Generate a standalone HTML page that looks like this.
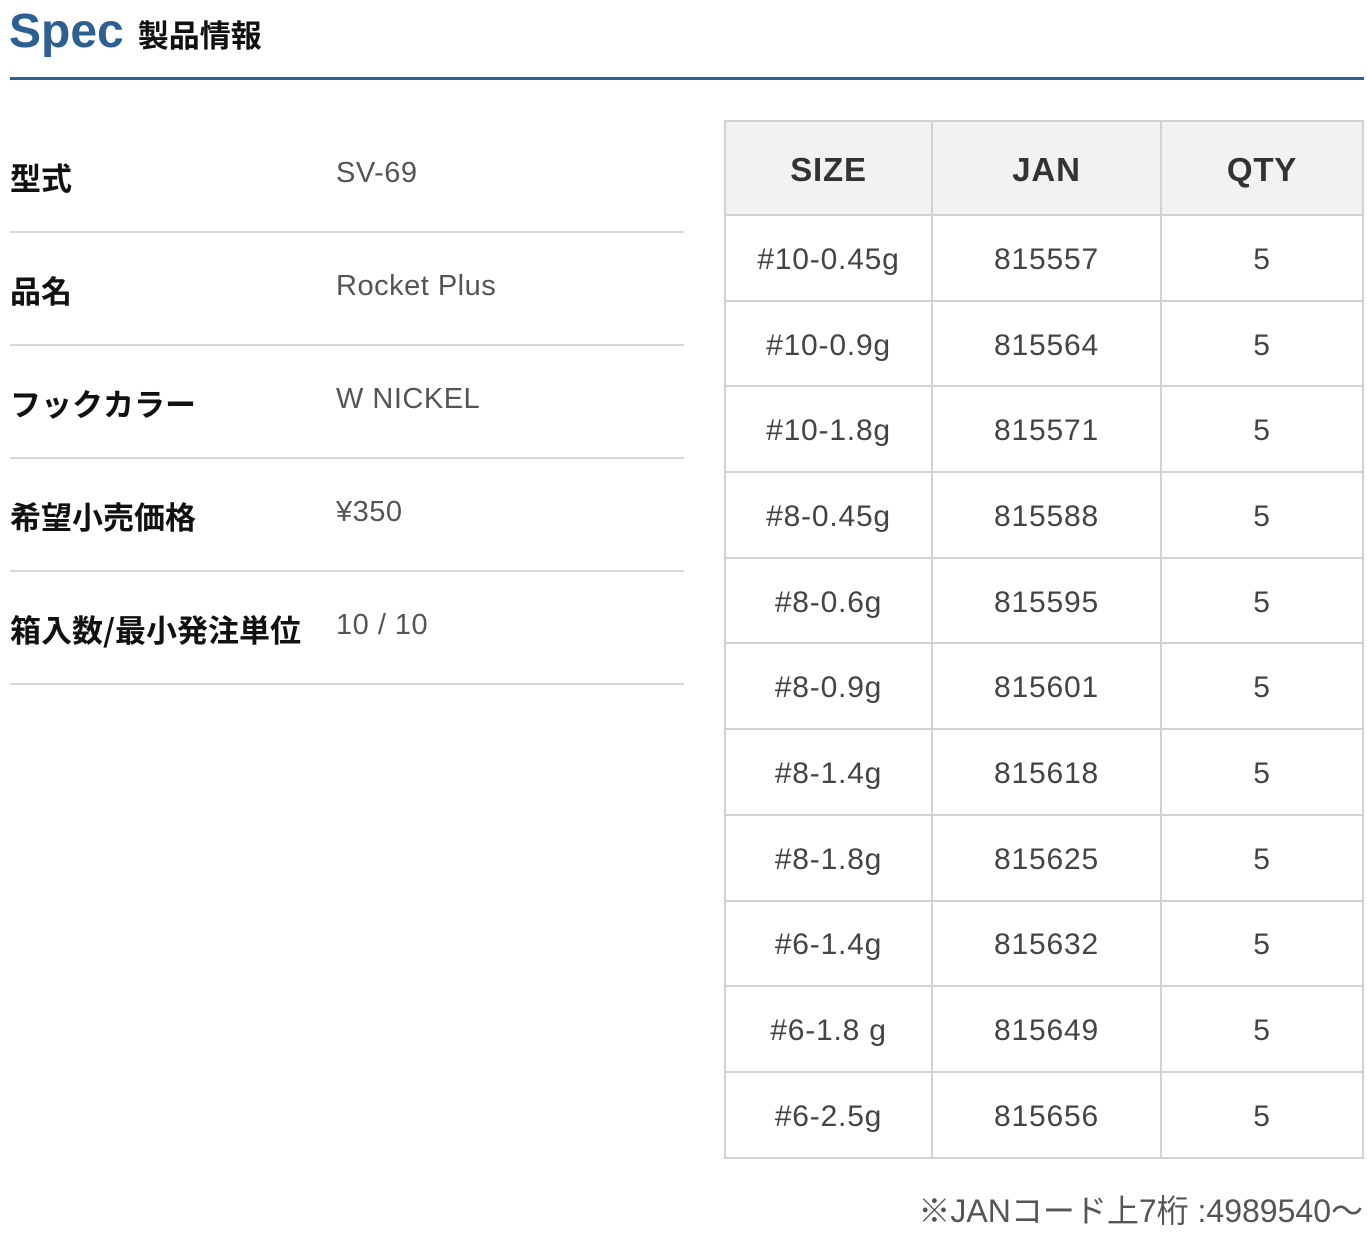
<!DOCTYPE html>
<html><head><meta charset="utf-8"><style>
body{margin:0;width:1367px;height:1236px;background:#fff;font-family:"Liberation Sans","Noto Sans CJK JP",sans-serif;position:relative;overflow:hidden}
.h{position:absolute;left:9px;top:4px;white-space:nowrap}
.h .s{font-size:48px;color:#2e5f93;font-weight:bold}
.h .j{font-size:31px;font-weight:bold;color:#111;margin-left:14px;font-family:"Noto Sans CJK JP",sans-serif}
.line{position:absolute;left:10px;top:77px;width:1354px;height:3px;background:#2e5f93}
.row{position:absolute;left:10px;width:674px;height:111px;border-bottom:2px solid #d8d8d8}
.row .l{position:absolute;left:0;top:37px;font-size:31px;font-weight:bold;color:#111;font-family:"Noto Sans CJK JP",sans-serif;line-height:40px}
.row .v{position:absolute;left:326px;top:37px;font-size:29px;color:#555;line-height:32px;letter-spacing:0.5px}
table{position:absolute;left:724px;top:120px;border-collapse:collapse;width:640px}
tr{height:85.7px}
tr.hd{height:94px}
td,th{border:2px solid #d2d2d2;text-align:center;font-size:30px;color:#444;font-weight:normal;padding:4px 0 0;letter-spacing:0.8px}
th{background:#f2f2f2;font-size:33px;color:#333;font-weight:bold;padding-top:4px}
.f{position:absolute;right:4px;top:1186px;font-size:32px;color:#555}
</style></head><body>
<div class="h"><span class="s">Spec</span><span class="j">製品情報</span></div>
<div class="line"></div>
<div class="row" style="top:120px"><div class="l">型式</div><div class="v">SV-69</div></div>
<div class="row" style="top:233px"><div class="l">品名</div><div class="v">Rocket Plus</div></div>
<div class="row" style="top:346px"><div class="l">フックカラー</div><div class="v">W NICKEL</div></div>
<div class="row" style="top:459px"><div class="l">希望小売価格</div><div class="v">¥350</div></div>
<div class="row" style="top:572px"><div class="l">箱入数/最小発注単位</div><div class="v">10 / 10</div></div>
<table>
<tr class="hd"><th style="width:205px">SIZE</th><th style="width:227px">JAN</th><th>QTY</th></tr>
<tr><td>#10-0.45g</td><td>815557</td><td>5</td></tr>
<tr><td>#10-0.9g</td><td>815564</td><td>5</td></tr>
<tr><td>#10-1.8g</td><td>815571</td><td>5</td></tr>
<tr><td>#8-0.45g</td><td>815588</td><td>5</td></tr>
<tr><td>#8-0.6g</td><td>815595</td><td>5</td></tr>
<tr><td>#8-0.9g</td><td>815601</td><td>5</td></tr>
<tr><td>#8-1.4g</td><td>815618</td><td>5</td></tr>
<tr><td>#8-1.8g</td><td>815625</td><td>5</td></tr>
<tr><td>#6-1.4g</td><td>815632</td><td>5</td></tr>
<tr><td>#6-1.8 g</td><td>815649</td><td>5</td></tr>
<tr><td>#6-2.5g</td><td>815656</td><td>5</td></tr>
</table>
<div class="f">※JANコード上7桁 :4989540〜</div>
</body></html>
